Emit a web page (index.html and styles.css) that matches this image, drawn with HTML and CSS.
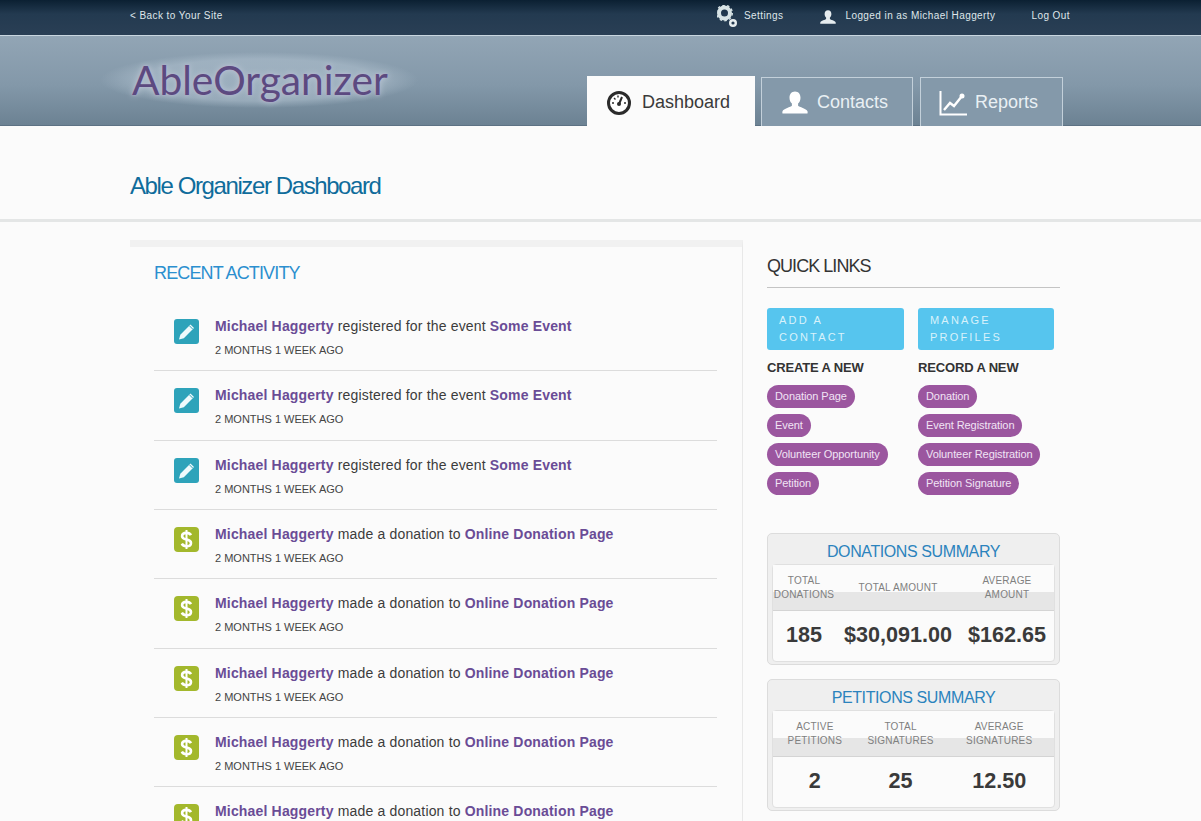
FILE: index.html
```html
<!DOCTYPE html>
<html lang="en">
<head>
    <meta charset="UTF-8">
    <title>Able Organizer Dashboard</title>
    <link rel="stylesheet" href="styles.css">
</head>
<body>
    <svg class="defs" width="0" height="0">
        <symbol id="icon-person" viewBox="0 0 26 24">
            <path d="M13 1c-3.600 0-5.500 2.800-5.500 6.200 0 2.600 1 4.600 2.400 5.800v2.200c-1 1.400-8.400 2.600-9.400 5.600-.3 1 0 2.200 0 2.200h25s.3-1.200 0-2.200c-1-3-8.400-4.200-9.400-5.600V13c1.400-1.200 2.400-3.200 2.400-5.800C18.500 3.800 16.600 1 13 1z" fill="currentColor"/>
        </symbol>
        <symbol id="icon-edit" viewBox="0 0 25 25">
            <rect x="0" y="0" width="25" height="25" rx="3" fill="#2ea3ba"/>
            <path d="M5 20.500l1.300-4.800L16.500 5.500l3.500 3.500L9.800 19.200z" fill="#eefafc"/>
            <path d="M15.300 6.700l3.500 3.500" stroke="#2ea3ba" stroke-width="1"/>
        </symbol>
        <symbol id="icon-money" viewBox="0 0 25 25">
            <rect x="0" y="0" width="25" height="25" rx="4" fill="#a3b82c"/>
            <path d="M17 8.200c-.8-1.500-2.500-2.300-4.500-2.300-2.500 0-4.400 1.200-4.400 3.300 0 4.400 8.900 2.400 8.900 6.700 0 2.100-2 3.300-4.500 3.300-2.100 0-3.900-.9-4.700-2.500" fill="none" stroke="#fff" stroke-width="2.600"/>
            <path d="M12.500 3v19" stroke="#fff" stroke-width="2"/>
        </symbol>
    </svg>

    <div class="topbar">
        <div class="wrap topbar-inner">
            <a class="back-link">&lt; Back to Your Site</a>
            <div class="top-links">
                <a class="top-link settings-link">
                    <svg class="gears" width="20" height="22" viewBox="0 0 20 22">
                        <circle cx="7.500" cy="8" r="5.500" fill="none" stroke="#d8e4e6" stroke-width="4"/>
                        <circle cx="7.500" cy="8" r="7.800" fill="none" stroke="#d8e4e6" stroke-width="1.400" stroke-dasharray="2.500 2.400"/>
                        <circle cx="16" cy="18" r="2.800" fill="none" stroke="#e8eef0" stroke-width="2.400"/>
                    </svg>
                    Settings
                </a>
                <a class="top-link user-link">
                    <svg class="top-person"><use href="#icon-person"/></svg>
                    Logged in as Michael Haggerty
                </a>
                <a class="top-link">Log Out</a>
            </div>
        </div>
    </div>

    <div class="header">
        <div class="wrap header-inner">
            <div class="logo">AbleOrganizer</div>
            <div class="tabs">
                <a class="tab tab-active tab-dashboard">
                    <svg width="26" height="26" viewBox="0 0 26 26">
                        <circle cx="13" cy="13" r="10.500" fill="#fff" stroke="#2b2b2b" stroke-width="3"/>
                        <path d="M13 14l3-7" stroke="#2b2b2b" stroke-width="2"/>
                        <circle cx="13" cy="14" r="2" fill="#2b2b2b"/>
                        <path d="M6 13h2M18 13h2M8 8l1.500 1.500M12 5.500v2" stroke="#2b2b2b" stroke-width="1.400"/>
                    </svg>
                    Dashboard
                </a>
                <a class="tab tab-contacts">
                    <svg class="tab-person"><use href="#icon-person"/></svg>
                    Contacts
                </a>
                <a class="tab tab-reports">
                    <svg width="28" height="26" viewBox="0 0 28 26">
                        <path d="M1.500 1v23.500H28" fill="none" stroke="#fff" stroke-width="2"/>
                        <path d="M5 20l6-7 4 3 8-10" fill="none" stroke="#fff" stroke-width="2.400"/>
                        <circle cx="23" cy="6" r="2.500" fill="#fff"/>
                    </svg>
                    Reports
                </a>
            </div>
        </div>
    </div>

    <div class="title-band">
        <div class="wrap">
            <h1>Able Organizer Dashboard</h1>
        </div>
    </div>

    <div class="wrap main">
        <div class="activity">
            <h2>RECENT ACTIVITY</h2>
            <ul class="feed">
                <li class="feed-item">
                    <svg class="feed-icon"><use href="#icon-edit"/></svg>
                    <div>
                        <p class="feed-text"><a>Michael Haggerty</a> registered for the event <a>Some Event</a></p>
                        <p class="feed-time">2 MONTHS 1 WEEK AGO</p>
                    </div>
                </li>
                <li class="feed-item">
                    <svg class="feed-icon"><use href="#icon-edit"/></svg>
                    <div>
                        <p class="feed-text"><a>Michael Haggerty</a> registered for the event <a>Some Event</a></p>
                        <p class="feed-time">2 MONTHS 1 WEEK AGO</p>
                    </div>
                </li>
                <li class="feed-item">
                    <svg class="feed-icon"><use href="#icon-edit"/></svg>
                    <div>
                        <p class="feed-text"><a>Michael Haggerty</a> registered for the event <a>Some Event</a></p>
                        <p class="feed-time">2 MONTHS 1 WEEK AGO</p>
                    </div>
                </li>
                <li class="feed-item">
                    <svg class="feed-icon"><use href="#icon-money"/></svg>
                    <div>
                        <p class="feed-text"><a>Michael Haggerty</a> made a donation to <a>Online Donation Page</a></p>
                        <p class="feed-time">2 MONTHS 1 WEEK AGO</p>
                    </div>
                </li>
                <li class="feed-item">
                    <svg class="feed-icon"><use href="#icon-money"/></svg>
                    <div>
                        <p class="feed-text"><a>Michael Haggerty</a> made a donation to <a>Online Donation Page</a></p>
                        <p class="feed-time">2 MONTHS 1 WEEK AGO</p>
                    </div>
                </li>
                <li class="feed-item">
                    <svg class="feed-icon"><use href="#icon-money"/></svg>
                    <div>
                        <p class="feed-text"><a>Michael Haggerty</a> made a donation to <a>Online Donation Page</a></p>
                        <p class="feed-time">2 MONTHS 1 WEEK AGO</p>
                    </div>
                </li>
                <li class="feed-item">
                    <svg class="feed-icon"><use href="#icon-money"/></svg>
                    <div>
                        <p class="feed-text"><a>Michael Haggerty</a> made a donation to <a>Online Donation Page</a></p>
                        <p class="feed-time">2 MONTHS 1 WEEK AGO</p>
                    </div>
                </li>
                <li class="feed-item">
                    <svg class="feed-icon"><use href="#icon-money"/></svg>
                    <div>
                        <p class="feed-text"><a>Michael Haggerty</a> made a donation to <a>Online Donation Page</a></p>
                    </div>
                </li>
            </ul>
        </div>

        <div class="sidebar">
            <h2 class="quick-title">QUICK LINKS</h2>
            <div class="quick-grid">
                <div class="quick-col">
                    <a class="quick-btn">ADD A CONTACT</a>
                    <h3>CREATE A NEW</h3>
                    <div class="pills">
                        <a class="pill">Donation Page</a>
                        <a class="pill">Event</a>
                        <a class="pill">Volunteer Opportunity</a>
                        <a class="pill">Petition</a>
                    </div>
                </div>
                <div class="quick-col">
                    <a class="quick-btn">MANAGE PROFILES</a>
                    <h3>RECORD A NEW</h3>
                    <div class="pills">
                        <a class="pill">Donation</a>
                        <a class="pill">Event Registration</a>
                        <a class="pill">Volunteer Registration</a>
                        <a class="pill">Petition Signature</a>
                    </div>
                </div>
            </div>

            <div class="summary">
                <h4>DONATIONS SUMMARY</h4>
                <div class="summary-box">
                    <div class="summary-labels">
                        <span class="col-narrow">TOTAL DONATIONS</span>
                        <span class="col-wide">TOTAL AMOUNT</span>
                        <span class="col-mid">AVERAGE AMOUNT</span>
                    </div>
                    <div class="summary-values">
                        <span class="col-narrow">185</span>
                        <span class="col-wide">$30,091.00</span>
                        <span class="col-mid">$162.65</span>
                    </div>
                </div>
            </div>

            <div class="summary">
                <h4>PETITIONS SUMMARY</h4>
                <div class="summary-box">
                    <div class="summary-labels">
                        <span class="col-first">ACTIVE PETITIONS</span>
                        <span class="col-second">TOTAL SIGNATURES</span>
                        <span class="col-third">AVERAGE SIGNATURES</span>
                    </div>
                    <div class="summary-values">
                        <span class="col-first">2</span>
                        <span class="col-second">25</span>
                        <span class="col-third">12.50</span>
                    </div>
                </div>
            </div>
        </div>
    </div>
</body>
</html>
```

FILE: styles.css
```css
html, body {
    height: 821px;
    overflow: hidden;
}
body {
    margin: 0;
    background-color: #fbfbfb;
    font-family: 'Liberation Sans', sans-serif;
    color: #333;
}
h1, h2, h3, h4, p, ul {
    margin: 0;
    padding: 0;
}
.defs {
    position: absolute;
}
.wrap {
    width: 941px;
    margin: 0 auto;
}

/* top bar */
.topbar {
    height: 35px;
    background: linear-gradient(#0b2032, #233a50 40%, #2a3f55);
    border-bottom: 1px solid #c9d6e0;
}
.topbar-inner {
    display: flex;
    justify-content: space-between;
    align-items: center;
    height: 31px;
    font-size: 10px;
    letter-spacing: .42px;
    color: #dfe6ea;
}
.top-links {
    display: flex;
    align-items: center;
    margin-right: 1px;
}
.top-link {
    display: flex;
    align-items: center;
}
.gears {
    margin-right: 7px;
    margin-top: 1px;
}
.settings-link {
    margin-right: 37px;
}
.user-link {
    margin-right: 36px;
}
.top-person {
    width: 16px;
    height: 16px;
    margin-right: 9px;
    margin-top: 3px;
    color: #e6ecef;
}

/* header */
.header {
    height: 90px;
    background: linear-gradient(#92a5b5, #8398a9 55%, #6c8293);
    border-bottom: 1px solid #5d7284;
    box-sizing: border-box;
}
.header-inner {
    display: flex;
    justify-content: space-between;
    height: 90px;
}
.logo {
    margin-top: 16px;
    margin-left: -30px;
    padding: 0 30px 0 32px;
    font-family: 'Lato', sans-serif;
    font-size: 40.700px;
    font-weight: 400;
    line-height: 56px;
    height: 56px;
    color: #5c4a80;
    background: radial-gradient(closest-side, rgba(175, 192, 206, .55) 75%, rgba(175, 192, 206, 0));
    text-shadow: 0 0 6px #c2ced9, 0 0 2px #b59ad0;
}
.tabs {
    display: flex;
    align-items: flex-end;
    margin-right: 8px;
}
.tab {
    display: flex;
    align-items: center;
    box-sizing: border-box;
    height: 49px;
    margin-left: 6px;
    padding-top: 1px;
    font-size: 18px;
    color: #e9f0f4;
    background-color: #8499aa;
    border: 1px solid #c3d0da;
    border-bottom: 0;
    padding-left: 18px;
}
.tab-active {
    width: 168px;
    height: 50px;
    padding-top: 3px;
    background-color: #fbfbfb;
    border: 0;
    color: #3a3a3a;
    padding-left: 19px;
}
.tab-active svg {
    margin-right: 10px;
}
.tab-contacts {
    width: 152px;
    padding-left: 20px;
}
.tab-person {
    width: 26px;
    height: 25px;
    margin-right: 9px;
    color: #fff;
}
.tab-reports {
    width: 143px;
    margin-left: 7px;
}
.tab-reports svg {
    margin-right: 8px;
}

/* page title */
.title-band {
    height: 96px;
    box-sizing: border-box;
    border-bottom: 3px solid #e4e6e6;
}
h1 {
    padding-top: 46px;
    font-size: 24px;
    font-weight: normal;
    line-height: 28px;
    letter-spacing: -1.400px;
    color: #0f6c9b;
}

/* main columns */
.main {
    display: flex;
    align-items: flex-start;
    margin-top: 18px;
}
.activity {
    box-sizing: border-box;
    width: 613px;
    height: 600px;
    padding: 0 25px 0 24px;
    border-top: 7px solid #f1f1f1;
    border-right: 1px solid #e8e8e8;
}
.activity h2 {
    margin-top: 15px;
    font-size: 18px;
    font-weight: normal;
    line-height: 22px;
    letter-spacing: -.87px;
    color: #2b8fcf;
}

/* feed */
.feed {
    list-style: none;
    margin-top: 18px;
}
.feed-item {
    display: flex;
    box-sizing: border-box;
    height: 69.330px;
    padding-top: 14px;
    padding-left: 20px;
    border-bottom: 1px solid #dcdcdc;
}
.feed-icon {
    width: 25px;
    height: 25px;
    margin-top: 3px;
    margin-right: 16px;
}
.feed-text {
    font-size: 14px;
    line-height: 20px;
    letter-spacing: .17px;
    color: #3c3c3c;
}
.feed-text a {
    font-weight: bold;
    color: #6a4c96;
}
.feed-time {
    margin-top: 7px;
    font-size: 11px;
    line-height: 14px;
    color: #444;
}

/* sidebar */
.sidebar {
    width: 293px;
    margin-left: 24px;
}
.quick-title {
    padding-bottom: 9px;
    margin-top: 14px;
    font-size: 18px;
    font-weight: normal;
    line-height: 24px;
    letter-spacing: -.95px;
    color: #333;
    border-bottom: 1px solid #c4c4c4;
}
.quick-grid {
    display: flex;
    margin-top: 20px;
    margin-bottom: 38px;
}
.quick-col {
    flex: none;
    width: 151px;
}
.quick-btn {
    display: block;
    box-sizing: border-box;
    width: 137px;
    height: 42px;
    padding: 4px 30px 0 12px;
    font-size: 11px;
    line-height: 17px;
    letter-spacing: 2.200px;
    color: #d8f2fb;
    background-color: #56c5ee;
    border-radius: 3px;
}
.quick-col:last-child .quick-btn {
    width: 136px;
}
h3 {
    margin-top: 10px;
    font-size: 13px;
    font-weight: bold;
    line-height: 16px;
    letter-spacing: -.15px;
    color: #333;
}
.pills {
    display: flex;
    flex-direction: column;
    align-items: flex-start;
    gap: 6px;
    margin-top: 9px;
}
.pill {
    height: 23px;
    padding: 0 8px;
    font-size: 11px;
    line-height: 22px;
    letter-spacing: -.08px;
    color: #f1e4f5;
    background-color: #9b569f;
    border-radius: 12px;
}

/* summaries */
.summary {
    box-sizing: border-box;
    height: 132px;
    margin-bottom: 14px;
    padding: 0 4px;
    background-color: #efefef;
    border: 1px solid #dcdcdc;
    border-radius: 5px;
}
h4 {
    height: 30px;
    font-size: 16px;
    font-weight: normal;
    line-height: 35px;
    letter-spacing: -.4px;
    text-align: center;
    color: #2b83bd;
}
.summary-box {
    height: 96px;
    background-color: #fbfbfb;
    border: 1px solid #e0e0e0;
    border-radius: 4px;
}
.summary-labels {
    display: flex;
    align-items: center;
    height: 45px;
    font-size: 10px;
    line-height: 14px;
    letter-spacing: .2px;
    text-align: center;
    color: #808080;
    background: linear-gradient(#fbfbfb 60%, #e6e6e6 60%);
    border-bottom: 1px solid #d4d4d4;
}
.summary-values {
    display: flex;
    align-items: center;
    height: 47px;
    font-size: 21.600px;
    font-weight: bold;
    text-align: center;
    color: #3a3a3a;
}
.col-narrow {
    width: 62px;
}
.col-wide {
    width: 126px;
}
.col-mid {
    width: 92px;
}
.col-first {
    width: 84px;
}
.col-second {
    width: 88px;
}
.col-third {
    width: 110px;
}
```
